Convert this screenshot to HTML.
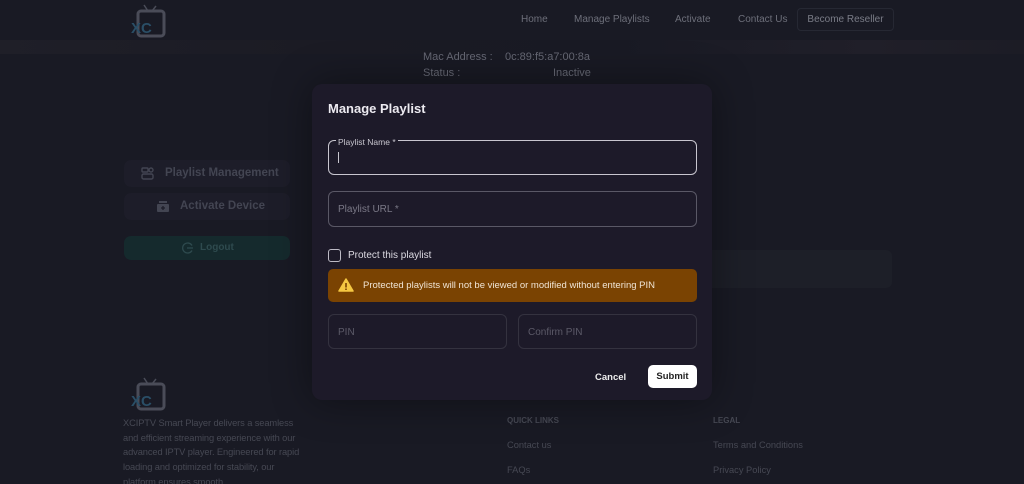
<!DOCTYPE html>
<html><head><meta charset="utf-8"><style>
*{box-sizing:border-box;margin:0;padding:0}
html,body{width:1024px;height:484px;overflow:hidden}
body{background:#191a24;font-family:"Liberation Sans",sans-serif;position:relative}
.a{position:absolute}
.banner{left:0;top:40px;width:1024px;height:14px;background:linear-gradient(90deg,#1f1f28,#1b1b24 30%,#191a24 60%,#201f29 85%,#1c1c25)}
.nav{top:14px;font-size:10px;color:#6d6f7a}
.side{left:124px;width:166px;height:27px;border-radius:7px;background:#1d1d29;color:#434552;font-size:11.5px;font-weight:bold}
.modal{left:312px;top:84px;width:400px;height:316px;background:#1d1a29;border-radius:10px;box-shadow:0 0 40px rgba(0,0,0,.4)}
.inp{position:absolute;left:16px;width:369px;border:1px solid #5a5866;border-radius:6px;color:#7a7886;font-size:10px}
.foot{color:#464853;font-size:9.3px}
</style></head><body>
<div class="a banner"></div>
<svg class="a" style="left:128px;top:4px" width="40" height="36" viewBox="0 0 40 36"><rect x="10" y="7" width="26" height="25" rx="3" fill="none" stroke="#4a4c58" stroke-width="3"/><path d="M20 7 L16 1 M24 7 L28 2" stroke="#4a4c58" stroke-width="1.5"/><text x="3" y="29" font-size="15" font-weight="bold" fill="#2a4e66" font-family="Liberation Sans">XC</text></svg>
<div class="a nav" style="left:521px">Home</div>
<div class="a nav" style="left:574px">Manage Playlists</div>
<div class="a nav" style="left:675px">Activate</div>
<div class="a nav" style="left:738px">Contact Us</div>
<div class="a" style="left:797px;top:8px;width:97px;height:23px;border:1px solid #262833;border-radius:4px;color:#7a7c87;font-size:10px;text-align:center;line-height:21px">Become Reseller</div>
<div class="a" style="left:423px;top:51px;font-size:11px;color:#666874">Mac Address :</div>
<div class="a" style="left:505px;top:51px;font-size:11px;color:#666874">0c:89:f5:a7:00:8a</div>
<div class="a" style="left:423px;top:67px;font-size:11px;color:#666874">Status :</div>
<div class="a" style="left:553px;top:67px;font-size:11px;color:#666874">Inactive</div>
<div class="a side" style="top:160px;line-height:27px;padding-left:41px">Playlist Management
<svg class="a" style="left:17px;top:7px" width="13" height="13" viewBox="0 0 13 13" fill="none" stroke="#434552" stroke-width="1.4"><rect x="1" y="1" width="6" height="4" rx="1"/><circle cx="10" cy="3" r="2"/><rect x="1" y="7" width="11" height="5" rx="1.5"/></svg></div>
<div class="a side" style="top:193px;line-height:27px;padding-left:56px">Activate Device
<svg class="a" style="left:33px;top:7px" width="12" height="13" viewBox="0 0 12 13"><rect x="2" y="1" width="8" height="2" fill="#434552"/><rect x="0" y="4" width="12" height="8" rx="1" fill="#434552"/><path d="M6 6v4M4 8h4" stroke="#1d1d29" stroke-width="1.3"/></svg></div>
<div class="a side" style="top:236px;height:24px;background:#152a2d;line-height:24px;padding-left:76px;font-size:10px;color:#2e4a4e">Logout
<svg class="a" style="left:58px;top:6px" width="12" height="12" viewBox="0 0 12 12" fill="none" stroke="#2e4a4e" stroke-width="1.3"><path d="M10 3.5A5 5 0 1 0 10 8.5"/><path d="M5 6h6"/></svg></div>
<div class="a" style="left:712px;top:250px;width:180px;height:38px;background:#1d1f28;border-radius:0 6px 6px 0"></div>
<svg class="a" style="left:128px;top:377px" width="40" height="36" viewBox="0 0 40 36"><rect x="10" y="7" width="26" height="25" rx="3" fill="none" stroke="#4a4c58" stroke-width="3"/><path d="M20 7 L16 1 M24 7 L28 2" stroke="#4a4c58" stroke-width="1.5"/><text x="3" y="29" font-size="15" font-weight="bold" fill="#2a4e66" font-family="Liberation Sans">XC</text></svg>
<div class="a foot" style="left:123px;top:416px;width:186px;line-height:14.7px;letter-spacing:-0.1px">XCIPTV Smart Player delivers a seamless and efficient streaming experience with our advanced IPTV player. Engineered for rapid loading and optimized for stability, our platform ensures smooth.</div>
<div class="a foot" style="left:507px;top:416px;font-size:8px;font-weight:bold">QUICK LINKS</div>
<div class="a foot" style="left:713px;top:416px;font-size:8px;font-weight:bold">LEGAL</div>
<div class="a foot" style="left:507px;top:440px">Contact us</div>
<div class="a foot" style="left:507px;top:465px">FAQs</div>
<div class="a foot" style="left:713px;top:440px">Terms and Conditions</div>
<div class="a foot" style="left:713px;top:465px">Privacy Policy</div>
<div class="a modal">
<div class="a" style="left:16px;top:17px;font-size:13px;font-weight:bold;color:#eceaf0">Manage Playlist</div>
<div class="inp" style="top:56px;height:35px;border:1.5px solid #c8c6cf"><div class="a" style="left:7px;top:-4px;font-size:8.5px;color:#c8c6cf;background:#1d1a29;padding:0 2px">Playlist Name *</div><div class="a" style="left:9px;top:11px;width:1px;height:11px;background:#c8c6cf"></div></div>
<div class="inp" style="top:107px;height:36px;line-height:36px;padding-left:9px">Playlist URL *</div>
<div class="a" style="left:16px;top:165px;width:13px;height:13px;border:1.5px solid #bdbbc5;border-radius:3px"></div>
<div class="a" style="left:36px;top:166px;font-size:10px;color:#dcdae2">Protect this playlist</div>
<div class="a" style="left:16px;top:185px;width:369px;height:33px;background:#7a4302;border-radius:5px;color:#f0e4d4;font-size:9.5px;line-height:33px;padding-left:35px">Protected playlists will not be viewed or modified without entering PIN
<svg class="a" style="left:10px;top:9px" width="16" height="14" viewBox="0 0 16 14"><path d="M8 1 L15 13 L1 13 Z" fill="#f5c842" stroke="#f5c842" stroke-linejoin="round" stroke-width="1.5"/><rect x="7.2" y="5" width="1.6" height="4.5" fill="#7a4302"/><rect x="7.2" y="10.5" width="1.6" height="1.5" fill="#7a4302"/></svg></div>
<div class="inp" style="top:230px;width:179px;height:35px;line-height:35px;padding-left:9px;border-color:#34323f;color:#5c5a68">PIN</div>
<div class="inp" style="left:206px;top:230px;width:179px;height:35px;line-height:35px;padding-left:9px;border-color:#34323f;color:#5c5a68">Confirm PIN</div>
<div class="a" style="left:283px;top:288px;font-size:9.5px;font-weight:bold;color:#eee">Cancel</div>
<div class="a" style="left:336px;top:281px;width:49px;height:23px;background:#fff;border-radius:5px;font-size:9.5px;font-weight:bold;color:#222;text-align:center;line-height:24px">Submit</div>
</div>
</body></html>
